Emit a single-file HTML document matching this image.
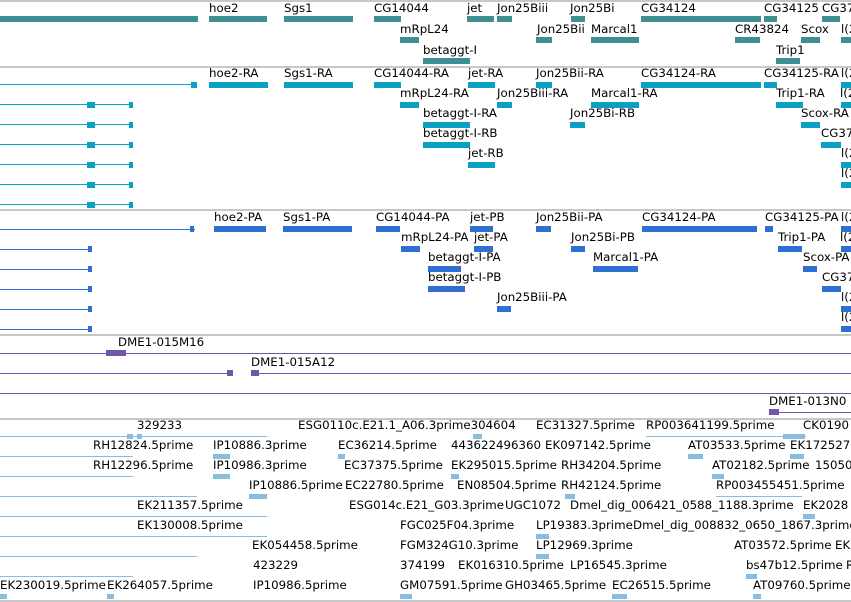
<!DOCTYPE html>
<html><head><meta charset="utf-8"><style>
*{margin:0;padding:0}
body{width:851px;height:602px;background:#fff;position:relative;overflow:hidden;font-family:"DejaVu Sans","Liberation Sans",sans-serif;font-size:11.8px;color:#000}
div{position:absolute}
.t{line-height:13px;white-space:nowrap;letter-spacing:0}
.s{left:0;width:851px;height:2px;background:#c8c8c8}
.a{background:#3f8e91;height:6px}
.b{background:#0aa0c2;height:6px}
.c{background:#2f6fd2;height:6px}
.p{background:#7057a8}
.l{background:#88bde0}
.lb{height:1px}
</style></head><body>
<div class="s" style="top:0"></div>
<!-- track 1 -->
<div class="t" style="left:209px;top:2px">hoe2</div>
<div class="t" style="left:284px;top:2px">Sgs1</div>
<div class="t" style="left:374px;top:2px">CG14044</div>
<div class="t" style="left:467px;top:2px">jet</div>
<div class="t" style="left:497px;top:2px">Jon25Biii</div>
<div class="t" style="left:570px;top:2px">Jon25Bi</div>
<div class="t" style="left:641px;top:2px">CG34124</div>
<div class="t" style="left:764px;top:2px">CG34125</div>
<div class="t" style="left:822px;top:2px">CG37</div>
<div class="a" style="left:0;top:16px;width:198px"></div>
<div class="a" style="left:209px;top:16px;width:58px"></div>
<div class="a" style="left:284px;top:16px;width:69px"></div>
<div class="a" style="left:374px;top:16px;width:27px"></div>
<div class="a" style="left:467px;top:16px;width:27px"></div>
<div class="a" style="left:497px;top:16px;width:15px"></div>
<div class="a" style="left:571px;top:16px;width:14px"></div>
<div class="a" style="left:641px;top:16px;width:120px"></div>
<div class="a" style="left:764px;top:16px;width:13px"></div>
<div class="a" style="left:822px;top:16px;width:18px"></div>
<div class="t" style="left:400px;top:23px">mRpL24</div>
<div class="t" style="left:537px;top:23px">Jon25Bii</div>
<div class="t" style="left:591px;top:23px">Marcal1</div>
<div class="t" style="left:735px;top:23px">CR43824</div>
<div class="t" style="left:801px;top:23px">Scox</div>
<div class="t" style="left:841px;top:23px">l(2</div>
<div class="a" style="left:400px;top:37px;width:19px"></div>
<div class="a" style="left:536px;top:37px;width:16px"></div>
<div class="a" style="left:591px;top:37px;width:48px"></div>
<div class="a" style="left:735px;top:37px;width:25px"></div>
<div class="a" style="left:801px;top:37px;width:19px"></div>
<div class="a" style="left:841px;top:37px;width:10px"></div>
<div class="t" style="left:423px;top:44px">betaggt-I</div>
<div class="t" style="left:776px;top:44px">Trip1</div>
<div class="a" style="left:423px;top:58px;width:47px"></div>
<div class="a" style="left:776px;top:58px;width:24px"></div>
<div class="s" style="top:66px"></div>
<!-- track 2 -->
<div class="t" style="left:209px;top:67px">hoe2-RA</div>
<div class="t" style="left:284px;top:67px">Sgs1-RA</div>
<div class="t" style="left:374px;top:67px">CG14044-RA</div>
<div class="t" style="left:468px;top:67px">jet-RA</div>
<div class="t" style="left:536px;top:67px">Jon25Bii-RA</div>
<div class="t" style="left:641px;top:67px">CG34124-RA</div>
<div class="t" style="left:764px;top:67px">CG34125-RA</div>
<div class="t" style="left:841px;top:67px">l(2</div>
<div class="b lb" style="left:0;top:84px;width:197px"></div>
<div class="b" style="left:191px;top:82px;width:6px"></div>
<div class="b" style="left:209px;top:82px;width:59px"></div>
<div class="b" style="left:284px;top:82px;width:69px"></div>
<div class="b" style="left:374px;top:82px;width:27px"></div>
<div class="b" style="left:468px;top:82px;width:27px"></div>
<div class="b" style="left:536px;top:82px;width:16px"></div>
<div class="b" style="left:641px;top:82px;width:120px"></div>
<div class="b" style="left:764px;top:82px;width:13px"></div>
<div class="b" style="left:841px;top:82px;width:10px"></div>
<div class="t" style="left:400px;top:87px">mRpL24-RA</div>
<div class="t" style="left:497px;top:87px">Jon25Biii-RA</div>
<div class="t" style="left:591px;top:87px">Marcal1-RA</div>
<div class="t" style="left:776px;top:87px">Trip1-RA</div>
<div class="t" style="left:840px;top:87px">l(2</div>
<div class="b" style="left:400px;top:102px;width:19px"></div>
<div class="b" style="left:497px;top:102px;width:15px"></div>
<div class="b" style="left:591px;top:102px;width:48px"></div>
<div class="b" style="left:776px;top:102px;width:27px"></div>
<div class="b" style="left:841px;top:102px;width:10px"></div>
<div class="t" style="left:423px;top:107px">betaggt-I-RA</div>
<div class="t" style="left:570px;top:107px">Jon25Bi-RB</div>
<div class="t" style="left:801px;top:107px">Scox-RA</div>
<div class="b" style="left:423px;top:122px;width:47px"></div>
<div class="b" style="left:570px;top:122px;width:15px"></div>
<div class="b" style="left:801px;top:122px;width:19px"></div>
<div class="t" style="left:423px;top:127px">betaggt-I-RB</div>
<div class="t" style="left:821px;top:127px">CG37</div>
<div class="b" style="left:423px;top:142px;width:47px"></div>
<div class="b" style="left:821px;top:142px;width:20px"></div>
<div class="t" style="left:468px;top:147px">jet-RB</div>
<div class="t" style="left:841px;top:147px">l(2</div>
<div class="b" style="left:468px;top:162px;width:27px"></div>
<div class="b" style="left:841px;top:162px;width:10px"></div>
<div class="t" style="left:841px;top:167px">l(2</div>
<div class="b" style="left:841px;top:182px;width:10px"></div>
<div class="b lb" style="left:0;top:104px;width:133px"></div>
<div class="b lb" style="left:0;top:124px;width:133px"></div>
<div class="b lb" style="left:0;top:144px;width:133px"></div>
<div class="b lb" style="left:0;top:164px;width:133px"></div>
<div class="b lb" style="left:0;top:184px;width:133px"></div>
<div class="b lb" style="left:0;top:204px;width:133px"></div>
<div class="b" style="left:87px;top:102px;width:8px"></div><div class="b" style="left:129px;top:102px;width:4px"></div>
<div class="b" style="left:87px;top:122px;width:8px"></div><div class="b" style="left:129px;top:122px;width:4px"></div>
<div class="b" style="left:87px;top:142px;width:8px"></div><div class="b" style="left:129px;top:142px;width:4px"></div>
<div class="b" style="left:87px;top:162px;width:8px"></div><div class="b" style="left:129px;top:162px;width:4px"></div>
<div class="b" style="left:87px;top:182px;width:8px"></div><div class="b" style="left:129px;top:182px;width:4px"></div>
<div class="b" style="left:87px;top:202px;width:8px"></div><div class="b" style="left:129px;top:202px;width:4px"></div>
<div class="s" style="top:209px"></div>
<!-- track 3 -->
<div class="t" style="left:214px;top:211px">hoe2-PA</div>
<div class="t" style="left:283px;top:211px">Sgs1-PA</div>
<div class="t" style="left:376px;top:211px">CG14044-PA</div>
<div class="t" style="left:470px;top:211px">jet-PB</div>
<div class="t" style="left:536px;top:211px">Jon25Bii-PA</div>
<div class="t" style="left:642px;top:211px">CG34124-PA</div>
<div class="t" style="left:765px;top:211px">CG34125-PA</div>
<div class="t" style="left:841px;top:211px">l(2</div>
<div class="c lb" style="left:0;top:229px;width:195px;height:1px"></div>
<div class="c" style="left:190px;top:226px;width:4px"></div>
<div class="c" style="left:214px;top:226px;width:52px"></div>
<div class="c" style="left:283px;top:226px;width:69px"></div>
<div class="c" style="left:376px;top:226px;width:24px"></div>
<div class="c" style="left:470px;top:226px;width:23px"></div>
<div class="c" style="left:536px;top:226px;width:15px"></div>
<div class="c" style="left:642px;top:226px;width:115px"></div>
<div class="c" style="left:765px;top:226px;width:8px"></div>
<div class="c" style="left:841px;top:226px;width:10px"></div>
<div class="t" style="left:401px;top:231px">mRpL24-PA</div>
<div class="t" style="left:474px;top:231px">jet-PA</div>
<div class="t" style="left:571px;top:231px">Jon25Bi-PB</div>
<div class="t" style="left:778px;top:231px">Trip1-PA</div>
<div class="t" style="left:840px;top:231px">l(2</div>
<div class="c" style="left:401px;top:246px;width:19px"></div>
<div class="c" style="left:474px;top:246px;width:19px"></div>
<div class="c" style="left:571px;top:246px;width:14px"></div>
<div class="c" style="left:778px;top:246px;width:24px"></div>
<div class="c" style="left:841px;top:246px;width:10px"></div>
<div class="t" style="left:428px;top:251px">betaggt-I-PA</div>
<div class="t" style="left:593px;top:251px">Marcal1-PA</div>
<div class="t" style="left:803px;top:251px">Scox-PA</div>
<div class="c" style="left:428px;top:266px;width:33px"></div>
<div class="c" style="left:593px;top:266px;width:45px"></div>
<div class="c" style="left:803px;top:266px;width:14px"></div>
<div class="t" style="left:428px;top:271px">betaggt-I-PB</div>
<div class="t" style="left:822px;top:271px">CG37</div>
<div class="c" style="left:428px;top:286px;width:37px"></div>
<div class="c" style="left:822px;top:286px;width:19px"></div>
<div class="t" style="left:497px;top:291px">Jon25Biii-PA</div>
<div class="t" style="left:841px;top:291px">l(2</div>
<div class="c" style="left:497px;top:306px;width:14px"></div>
<div class="c" style="left:841px;top:306px;width:10px"></div>
<div class="t" style="left:841px;top:311px">l(2</div>
<div class="c" style="left:841px;top:326px;width:10px"></div>
<div class="c lb" style="left:0;top:249px;width:92px;height:1px"></div>
<div class="c lb" style="left:0;top:269px;width:92px;height:1px"></div>
<div class="c lb" style="left:0;top:289px;width:92px;height:1px"></div>
<div class="c lb" style="left:0;top:309px;width:92px;height:1px"></div>
<div class="c lb" style="left:0;top:329px;width:92px;height:1px"></div>
<div class="c" style="left:88px;top:246px;width:4px"></div>
<div class="c" style="left:88px;top:266px;width:4px"></div>
<div class="c" style="left:88px;top:286px;width:4px"></div>
<div class="c" style="left:88px;top:306px;width:4px"></div>
<div class="c" style="left:88px;top:326px;width:4px"></div>
<div class="s" style="top:334px"></div>
<!-- track 4 -->
<div class="t" style="left:118px;top:336px">DME1-015M16</div>
<div class="p" style="left:0;top:353px;width:851px;height:1px"></div>
<div class="p" style="left:106px;top:350px;width:20px;height:6px"></div>
<div class="t" style="left:251px;top:356px">DME1-015A12</div>
<div class="p" style="left:0;top:373px;width:233px;height:1px"></div>
<div class="p" style="left:251px;top:373px;width:600px;height:1px"></div>
<div class="p" style="left:227px;top:370px;width:6px;height:6px"></div>
<div class="p" style="left:251px;top:370px;width:8px;height:6px"></div>
<div class="p" style="left:0;top:393px;width:851px;height:1px"></div>
<div class="t" style="left:769px;top:395px">DME1-013N0</div>
<div class="p" style="left:769px;top:412px;width:82px;height:1px"></div>
<div class="p" style="left:769px;top:409px;width:10px;height:6px"></div>
<div class="s" style="top:418px"></div>
<!-- track 5 -->
<div class="t" style="left:137px;top:419px">329233</div>
<div class="t" style="left:298px;top:419px">ESG0110c.E21.1_A06.3prime304604</div>
<div class="t" style="left:536px;top:419px">EC31327.5prime</div>
<div class="t" style="left:646px;top:419px">RP003641199.5prime</div>
<div class="t" style="left:803px;top:419px">CK0190</div>
<div class="l" style="left:0;top:436px;width:267px;height:1px"></div>
<div class="l" style="left:646px;top:436px;width:160px;height:1px"></div>
<div class="l" style="left:127px;top:434px;width:6px;height:5px"></div>
<div class="l" style="left:137px;top:434px;width:5px;height:5px"></div>
<div class="l" style="left:473px;top:434px;width:9px;height:5px"></div>
<div class="l" style="left:783px;top:434px;width:22px;height:5px"></div>
<div class="t" style="left:93px;top:439px">RH12824.5prime</div>
<div class="t" style="left:213px;top:439px">IP10886.3prime</div>
<div class="t" style="left:338px;top:439px">EC36214.5prime</div>
<div class="t" style="left:451px;top:439px">443622496360</div>
<div class="t" style="left:545px;top:439px">EK097142.5prime</div>
<div class="t" style="left:688px;top:439px">AT03533.5prime</div>
<div class="t" style="left:790px;top:439px">EK172527</div>
<div class="l" style="left:0;top:456px;width:133px;height:1px"></div>
<div class="l" style="left:213px;top:454px;width:17px;height:5px"></div>
<div class="l" style="left:338px;top:454px;width:7px;height:5px"></div>
<div class="l" style="left:688px;top:454px;width:15px;height:5px"></div>
<div class="l" style="left:790px;top:454px;width:14px;height:5px"></div>
<div class="t" style="left:93px;top:459px">RH12296.5prime</div>
<div class="t" style="left:213px;top:459px">IP10986.3prime</div>
<div class="t" style="left:344px;top:459px">EC37375.5prime</div>
<div class="t" style="left:451px;top:459px">EK295015.5prime</div>
<div class="t" style="left:561px;top:459px">RH34204.5prime</div>
<div class="t" style="left:712px;top:459px">AT02182.5prime</div>
<div class="t" style="left:815px;top:459px">15050</div>
<div class="l" style="left:0;top:476px;width:133px;height:1px"></div>
<div class="l" style="left:213px;top:474px;width:17px;height:5px"></div>
<div class="l" style="left:451px;top:474px;width:8px;height:5px"></div>
<div class="l" style="left:712px;top:474px;width:12px;height:5px"></div>
<div class="t" style="left:249px;top:479px">IP10886.5prime</div>
<div class="t" style="left:345px;top:479px">EC22780.5prime</div>
<div class="t" style="left:457px;top:479px">EN08504.5prime</div>
<div class="t" style="left:561px;top:479px">RH42124.5prime</div>
<div class="t" style="left:716px;top:479px">RP003455451.5prime</div>
<div class="l" style="left:0;top:496px;width:197px;height:1px"></div>
<div class="l" style="left:716px;top:496px;width:86px;height:1px"></div>
<div class="l" style="left:249px;top:494px;width:18px;height:5px"></div>
<div class="l" style="left:565px;top:494px;width:10px;height:5px"></div>
<div class="t" style="left:137px;top:499px">EK211357.5prime</div>
<div class="t" style="left:349px;top:499px">ESG014c.E21_G03.3prime</div>
<div class="t" style="left:505px;top:499px">UGC1072</div>
<div class="t" style="left:570px;top:499px">Dmel_dig_006421_0588_1188.3prime</div>
<div class="t" style="left:803px;top:499px">EK2028</div>
<div class="l" style="left:0;top:516px;width:267px;height:1px"></div>
<div class="l" style="left:803px;top:514px;width:12px;height:5px"></div>
<div class="t" style="left:137px;top:519px">EK130008.5prime</div>
<div class="t" style="left:400px;top:519px">FGC025F04.3prime</div>
<div class="t" style="left:536px;top:519px">LP19383.3prime</div>
<div class="t" style="left:633px;top:519px">Dmel_dig_008832_0650_1867.3prime</div>
<div class="l" style="left:0;top:536px;width:267px;height:1px"></div>
<div class="l" style="left:536px;top:534px;width:13px;height:5px"></div>
<div class="t" style="left:252px;top:539px">EK054458.5prime</div>
<div class="t" style="left:400px;top:539px">FGM324G10.3prime</div>
<div class="t" style="left:536px;top:539px">LP12969.3prime</div>
<div class="t" style="left:734px;top:539px">AT03572.5prime</div>
<div class="t" style="left:835px;top:539px">EK</div>
<div class="l" style="left:0;top:556px;width:197px;height:1px"></div>
<div class="l" style="left:536px;top:554px;width:13px;height:5px"></div>
<div class="t" style="left:253px;top:559px">423229</div>
<div class="t" style="left:400px;top:559px">374199</div>
<div class="t" style="left:458px;top:559px">EK016310.5prime</div>
<div class="t" style="left:570px;top:559px">LP16545.3prime</div>
<div class="t" style="left:746px;top:559px">bs47b12.5prime</div>
<div class="t" style="left:846px;top:559px">R</div>
<div class="l" style="left:0;top:576px;width:133px;height:1px"></div>
<div class="l" style="left:746px;top:574px;width:11px;height:5px"></div>
<div class="t" style="left:0;top:579px">EK230019.5prime</div>
<div class="t" style="left:107px;top:579px">EK264057.5prime</div>
<div class="t" style="left:253px;top:579px">IP10986.5prime</div>
<div class="t" style="left:400px;top:579px">GM07591.5prime</div>
<div class="t" style="left:505px;top:579px">GH03465.5prime</div>
<div class="t" style="left:612px;top:579px">EC26515.5prime</div>
<div class="t" style="left:753px;top:579px">AT09760.5prime</div>
<div class="l" style="left:0;top:594px;width:7px;height:5px"></div>
<div class="l" style="left:107px;top:594px;width:7px;height:5px"></div>
<div class="l" style="left:400px;top:594px;width:12px;height:5px"></div>
<div class="l" style="left:612px;top:594px;width:15px;height:5px"></div>
<div class="l" style="left:753px;top:594px;width:8px;height:5px"></div>
<div class="s" style="top:600px"></div>
</body></html>
